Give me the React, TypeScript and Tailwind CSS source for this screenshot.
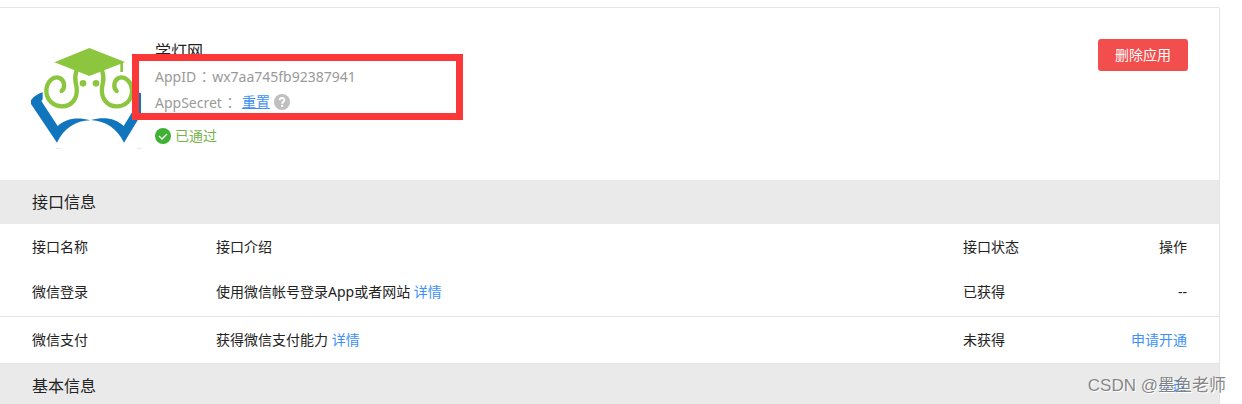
import type { ReactNode } from 'react'

type ApiRow = {
  name: string
  intro: string
  status: string
  action: string | null
}

const apiRows: ApiRow[] = [
  { name: '微信登录', intro: '使用微信帐号登录App或者网站', status: '已获得', action: null },
  { name: '微信支付', intro: '获得微信支付能力', status: '未获得', action: '申请开通' },
]

function AppLogo() {
  return (
    <svg viewBox="33 27 330 330" className="size-[110px] shrink-0" role="img" aria-label="学灯网">
      <g fill="none" stroke="#8cc63f" strokeWidth="13" strokeLinecap="round">
        <path d="M125 183C137 172 134 151 119 144C101 136 79 155 79 184C80 211 101 229 126 229C157 229 173 204 170 174C168 156 161 148 169 124" />
        <path d="M290 183C278 172 282 151 296 144C314 137 336 155 336 184C336 211 315 229 290 229C260 229 243 204 246 174C248 156 255 148 247 124" />
      </g>
      <path fill="#8cc63f" d="M208 54L315 96L309 99V126H301V102L208 138L103 97Z" />
      <circle cx="189" cy="160" r="10" fill="#8cc63f" />
      <circle cx="228" cy="160" r="10" fill="#8cc63f" />
      <g fill="#1075bd">
        <path d="M68 187V208L64 213L113 288C137 266 170 260 211 271C166 272 132 295 111 338L33 222V211C42 198 54 191 68 187Z" />
        <path d="M213 270C254 259 288 266 311 288L357 213L355 208V187L363 190V254L312 338C291 295 257 273 213 270Z" />
      </g>
      <path d="M108 355H121M352 355H363" stroke="#e3e3e3" strokeWidth="3" />
    </svg>
  )
}

function CheckIcon() {
  return (
    <svg viewBox="0 0 16 16" className="size-4" aria-hidden="true">
      <circle cx="8" cy="8" r="8" fill="#3eb135" />
      <path d="M4 8L7 11L12 6" fill="none" stroke="#fff" strokeWidth="1.3" />
    </svg>
  )
}

function HelpIcon() {
  return (
    <svg viewBox="0 0 16 16" className="size-4" aria-hidden="true">
      <circle cx="8" cy="8" r="8" fill="#bfbfbf" />
      <path d="M5.7 6.3C5.7 3.2 10.4 3.3 10.4 6C10.4 7.8 8.1 7.8 8.1 9.8" fill="none" stroke="#fff" strokeWidth="1.9" />
      <rect x="7.1" y="10.9" width="2" height="2" fill="#fff" />
    </svg>
  )
}

function Colon() {
  return <span className="mx-px font-['Noto_Sans_CJK_TC',sans-serif]">：</span>
}

function SectionBar({ title, children }: { title: string; children?: ReactNode }) {
  return (
    <div className="flex h-11 items-center justify-between bg-[#eaeaea] px-8">
      <h2 className="text-base">{title}</h2>
      {children}
    </div>
  )
}

function TextLink({ children }: { children: ReactNode }) {
  return (
    <a href="#" className="text-[#3d91f7]">
      {children}
    </a>
  )
}

export default function App() {
  return (
    <div className="relative h-screen overflow-hidden bg-white pt-[7px] pr-[22px] font-['Noto_Sans','Noto_Sans_CJK_SC',sans-serif] text-sm text-[#222]">
      <main className="rounded-tr-xs border-t border-r border-[#e4e4e4]">
        <header className="flex h-[172px] items-start justify-between px-[31px] pt-[31px]">
          <div className="relative flex gap-[14px]">
            <AppLogo />
            <div>
              <h1 className="h-6 text-base leading-6">学灯网</h1>
              <p className="h-[26px] leading-[26px] text-[#9a9a9a]">
                AppID
                <Colon />
                wx7aa745fb92387941
              </p>
              <div className="flex h-[26px] items-center text-[#9a9a9a]">
                <span>
                  AppSecret
                  <Colon />
                </span>
                <a href="#" className="ml-1 text-[#3d91f7] underline">
                  重置
                </a>
                <button type="button" aria-label="帮助" className="ml-1">
                  <HelpIcon />
                </button>
              </div>
              <p className="mt-2 flex h-[26px] items-center gap-1 text-[#79b34b]">
                <CheckIcon />
                已通过
              </p>
            </div>
            <div className="pointer-events-none absolute top-[15px] left-[101px] h-[66px] w-[331px] border-[7px] border-[#fc3737]" />
          </div>
          <button type="button" className="h-8 w-[90px] rounded-[3px] bg-[#f24e4e] text-white">
            删除应用
          </button>
        </header>

        <SectionBar title="接口信息" />

        <table className="w-full table-fixed text-left">
          <thead>
            <tr className="h-[45px]">
              <th className="w-[216px] pl-8 font-normal">接口名称</th>
              <th className="font-normal">接口介绍</th>
              <th className="w-32 font-normal">接口状态</th>
              <th className="w-32 pr-8 text-right font-normal">操作</th>
            </tr>
          </thead>
          <tbody>
            {apiRows.map(row => (
              <tr key={row.name} className="h-[47px] border-b border-[#e4e4e4]">
                <td className="pl-8">{row.name}</td>
                <td>
                  {row.intro} <TextLink>详情</TextLink>
                </td>
                <td>{row.status}</td>
                <td className="pr-8 text-right">{row.action ? <TextLink>{row.action}</TextLink> : '--'}</td>
              </tr>
            ))}
          </tbody>
        </table>

        <SectionBar title="基本信息">
          <TextLink>修改</TextLink>
        </SectionBar>
      </main>

      <span className="pointer-events-none absolute right-4 bottom-1.5 font-['Liberation_Sans','Noto_Sans_CJK_SC',sans-serif] text-[17px] leading-6 text-[#777]/90 [text-shadow:1px_1px_0_#fff]">
        CSDN @墨鱼老师
      </span>
    </div>
  )
}
